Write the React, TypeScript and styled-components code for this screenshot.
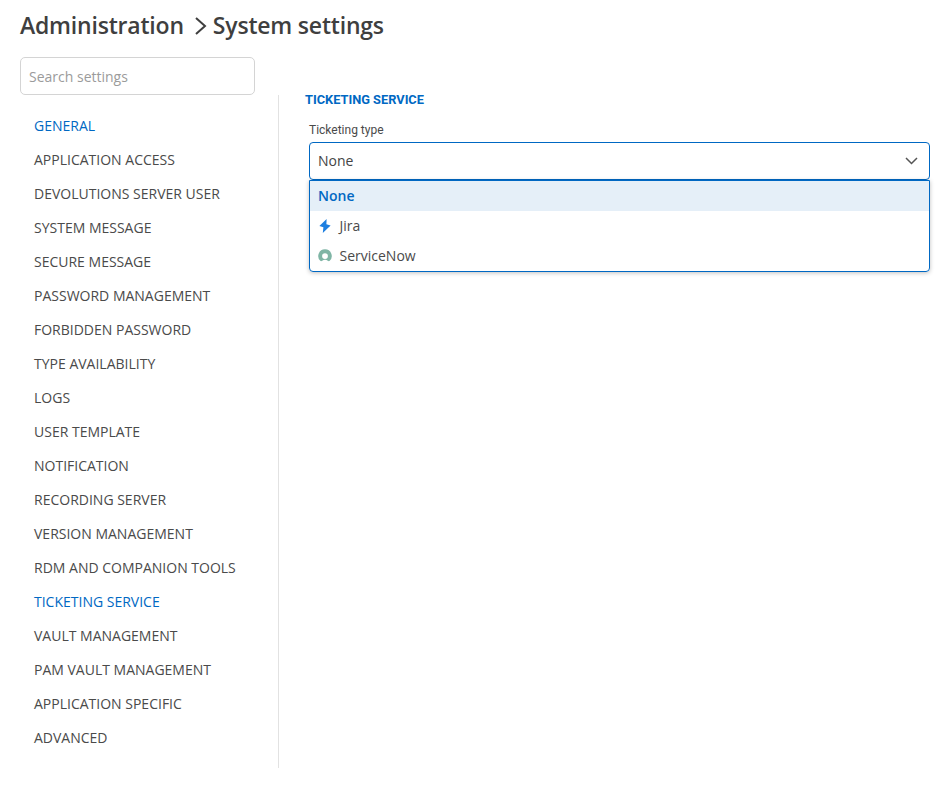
import { createGlobalStyle } from "styled-components";
import styled from "styled-components";

const GlobalStyle = createGlobalStyle`
	html, body {
		margin: 0;
		background: #ffffff;
	}
	body {
		font-family: "Open Sans", "Liberation Sans", sans-serif;
		color: #444444;
	}
`;

const Page = styled.div`
	box-sizing: border-box;
	height: 785px;
	overflow: hidden;
	padding: 8px 18px 0 20px;
	width: 948px;
`;

const Breadcrumb = styled.div`
	align-items: center;
	color: #3f3f3f;
	display: flex;
	font-size: 23px;
	font-weight: 600;
	height: 34px;
	letter-spacing: -0.2px;
`;

const Chevron = styled.svg`
	height: 20px;
	margin: 2px 3px 0 8px;
	width: 18px;
`;

const SearchBox = styled.input`
	border: 1px solid #d4d4d4;
	border-radius: 5px;
	box-sizing: border-box;
	display: block;
	font-family: "Open Sans", sans-serif;
	font-size: 14px;
	height: 38px;
	margin-top: 15px;
	outline: none;
	padding: 0 8px;
	width: 235px;

	&::placeholder {
		color: #9b9b9b;
		opacity: 1;
	}
`;

const Columns = styled.div`
	display: flex;
`;

const Sidebar = styled.nav`
	border-right: 1px solid #e2e2e2;
	box-sizing: border-box;
	display: flex;
	flex-direction: column;
	height: 673px;
	padding: 14px 0 0 14px;
	width: 259px;
`;

const NavItem = styled.div<{ $active?: boolean }>`
	color: ${({ $active }) => ($active ? "#0068c3" : "#4a4a4a")};
	flex: 0 0 34px;
	font-size: 14px;
	line-height: 34px;
	white-space: nowrap;
`;

const Content = styled.section`
	display: flex;
	flex: 1;
	flex-direction: column;
	padding-left: 26px;
`;

const SectionTitle = styled.h2`
	color: #0068c3;
	font-family: Roboto, sans-serif;
	font-size: 12.8px;
	font-weight: 700;
	line-height: 16px;
	margin: -3px 0 0;
`;

const Field = styled.div`
	margin: 15px 0 0 4px;
`;

const FieldLabel = styled.label`
	color: #4a4a4a;
	display: block;
	font-family: Roboto, sans-serif;
	font-size: 12px;
	line-height: 14px;
	margin-bottom: 5px;
`;

const SelectBox = styled.div`
	align-items: center;
	border: 1px solid #0068c3;
	border-radius: 4px;
	box-sizing: border-box;
	color: #444444;
	display: flex;
	font-size: 14px;
	height: 38px;
	justify-content: space-between;
	padding: 0 11px 2px 8px;
`;

const CaretIcon = styled.svg`
	height: 8px;
	margin-top: 2px;
	width: 13px;
`;

const Dropdown = styled.div`
	border: 1px solid #0068c3;
	border-top-width: 1.5px;
	border-radius: 0 0 4px 4px;
	box-shadow: 0 1px 4px rgba(0, 0, 0, 0.25);
	box-sizing: border-box;
	display: flex;
	flex-direction: column;
	height: 92px;
	margin-top: 0;
`;

const Option = styled.div<{ $selected?: boolean }>`
	align-items: center;
	background: ${({ $selected }) => ($selected ? "#e5eff8" : "transparent")};
	box-sizing: border-box;
	color: ${({ $selected }) => ($selected ? "#0068c3" : "#4a4a4a")};
	display: flex;
	flex: 0 0 30px;
	font-size: 14px;
	font-weight: ${({ $selected }) => ($selected ? 600 : 400)};
	gap: 7.5px;
	padding: 0 0 2px 8px;
`;

const OptionIcon = styled.svg`
	flex: none;
	height: 14px;
	margin-top: 2px;
	width: 14px;
`;

const navItems = [
	"GENERAL",
	"APPLICATION ACCESS",
	"DEVOLUTIONS SERVER USER",
	"SYSTEM MESSAGE",
	"SECURE MESSAGE",
	"PASSWORD MANAGEMENT",
	"FORBIDDEN PASSWORD",
	"TYPE AVAILABILITY",
	"LOGS",
	"USER TEMPLATE",
	"NOTIFICATION",
	"RECORDING SERVER",
	"VERSION MANAGEMENT",
	"RDM AND COMPANION TOOLS",
	"TICKETING SERVICE",
	"VAULT MANAGEMENT",
	"PAM VAULT MANAGEMENT",
	"APPLICATION SPECIFIC",
	"ADVANCED",
];

const activeItems = ["GENERAL", "TICKETING SERVICE"];

export default function App() {
	return (
		<>
			<GlobalStyle />
			<Page>
				<Breadcrumb>
					Administration
					<Chevron viewBox="0 0 18 20">
						<path d="M4 2l9 8-9 8" fill="none" stroke="#3f3f3f" strokeWidth="2" />
					</Chevron>
					System settings
				</Breadcrumb>
				<SearchBox placeholder="Search settings" />
				<Columns>
					<Sidebar>
						{navItems.map((item) => (
							<NavItem key={item} $active={activeItems.includes(item)}>
								{item}
							</NavItem>
						))}
					</Sidebar>
					<Content>
						<SectionTitle>TICKETING SERVICE</SectionTitle>
						<Field>
							<FieldLabel>Ticketing type</FieldLabel>
							<SelectBox>
								None
								<CaretIcon viewBox="0 0 13 8">
									<path d="M1 1l5.5 5.5L12 1" fill="none" stroke="#555555" strokeWidth="1.5" />
								</CaretIcon>
							</SelectBox>
							<Dropdown>
								<Option $selected>None</Option>
								<Option>
									<OptionIcon viewBox="0 0 14 14">
										<path d="M8.6 0L1.4 6.9l4 1.4L4.8 14l7.8-7.4-4.2-1.3z" fill="#1e7fe0" />
									</OptionIcon>
									Jira
								</Option>
								<Option>
									<OptionIcon viewBox="0 0 14 14">
										<path
											fillRule="evenodd"
											d="M7 .3a6.7 6.7 0 0 1 4.7 11.5c-.7.7-1.4.3-1.9-.1A4.4 4.4 0 0 0 7 10.8c-1 0-1.9.3-2.8.9-.5.4-1.2.8-1.9.1A6.7 6.7 0 0 1 7 .3zm0 3.9A2.9 2.9 0 1 0 7 10 2.9 2.9 0 0 0 7 4.2z"
											fill="#7fb5a5"
										/>
									</OptionIcon>
									ServiceNow
								</Option>
							</Dropdown>
						</Field>
					</Content>
				</Columns>
			</Page>
		</>
	);
}
